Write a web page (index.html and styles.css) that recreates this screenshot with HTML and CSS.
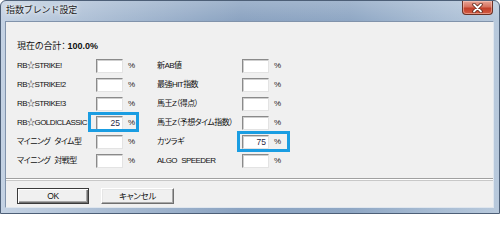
FILE: index.html
```html
<!DOCTYPE html>
<html lang="ja">
<head>
<meta charset="utf-8">
<title>指数ブレンド設定</title>
<link rel="stylesheet" href="styles.css">
</head>
<body>
<div class="window">
  <div class="titlebar">
    <span class="title">指数ブレンド設定</span>
    <button class="close" aria-label="閉じる">
      <svg width="13" height="10" viewBox="0 0 13 10">
        <path d="M3 1.5 L10 8.5 M10 1.5 L3 8.5" stroke="#5a2418" stroke-width="3.4" stroke-linecap="round"/>
        <path d="M3 1.5 L10 8.5 M10 1.5 L3 8.5" stroke="#ffffff" stroke-width="1.8" stroke-linecap="round"/>
      </svg>
    </button>
  </div>
  <div class="client">
    <div class="top">
      <div class="summary">現在の合計： <b>100.0%</b></div>
      <div class="grid">
        <span class="label">RB☆STRIKE!</span><span class="cell"><input class="field" type="text" value=""></span><span class="pct">%</span>
        <span class="label">新AB値</span><span class="cell"><input class="field" type="text" value=""></span><span class="pct">%</span>

        <span class="label">RB☆STRIKE!2</span><span class="cell"><input class="field" type="text" value=""></span><span class="pct">%</span>
        <span class="label">最強HIT指数</span><span class="cell"><input class="field" type="text" value=""></span><span class="pct">%</span>

        <span class="label">RB☆STRIKE!3</span><span class="cell"><input class="field" type="text" value=""></span><span class="pct">%</span>
        <span class="label">馬王Z（得点）</span><span class="cell"><input class="field" type="text" value=""></span><span class="pct">%</span>

        <span class="label">RB☆GOLD!CLASSIC</span><span class="cell"><input class="field" type="text" value="25"><span class="mark mark-a"></span></span><span class="pct">%</span>
        <span class="label">馬王Z（予想タイム指数）</span><span class="cell"><input class="field" type="text" value=""></span><span class="pct">%</span>

        <span class="label">マイニング タイム型</span><span class="cell"><input class="field" type="text" value=""></span><span class="pct">%</span>
        <span class="label">カツラギ</span><span class="cell"><input class="field" type="text" value="75"><span class="mark mark-b"></span></span><span class="pct">%</span>

        <span class="label">マイニング 対戦型</span><span class="cell"><input class="field" type="text" value=""></span><span class="pct">%</span>
        <span class="label">ALGO SPEEDER</span><span class="cell"><input class="field" type="text" value=""></span><span class="pct">%</span>
      </div>
    </div>
    <div class="bottom">
      <button class="btn btn-default">OK</button>
      <button class="btn btn-cancel">キャンセル</button>
    </div>
  </div>
</div>
</body>
</html>
```

FILE: styles.css
```css
html, body {
  margin: 0;
  padding: 0;
  width: 500px;
  height: 214px;
  overflow: hidden;
  background: #ffffff;
}

.window {
  width: 500px;
  height: 214px;
  box-sizing: border-box;
  border: 1px solid #4d5f77;
  border-radius: 6px 6px 0 0;
  background:
    linear-gradient(180deg, rgba(255,255,255,0.18) 0px, rgba(255,255,255,0) 20px),
    linear-gradient(90deg, #c4d2e3 0%, #a9bcd3 22%, #8ba3c1 48%, #8fa7c4 70%, #a9bdd4 88%, #b8c9dc 100%);
  display: flex;
  flex-direction: column;
  font-family: "Liberation Sans", "Noto Sans CJK JP", sans-serif;
  color: #111;
}

.titlebar {
  height: 19px;
  flex: none;
  display: flex;
  align-items: flex-start;
  padding-left: 5px;
  padding-right: 6px;
}

.title {
  font-family: "Noto Sans CJK JP", sans-serif;
  font-size: 9px;
  line-height: 18px;
  color: #1b1b1b;
  letter-spacing: -0.1px;
  text-shadow: 0 0 6px rgba(255,255,255,0.95), 0 0 3px rgba(255,255,255,0.9);
}

.close {
  margin-left: auto;
  width: 31px;
  height: 14px;
  padding: 0;
  border: 1px solid #6b3226;
  border-top: none;
  border-radius: 0 0 4px 4px;
  background: linear-gradient(180deg, #e8a496 0%, #d7725f 45%, #c2402a 55%, #d35b43 100%);
  box-shadow: inset 0 0 0 1px rgba(255,220,210,0.45);
  display: flex;
  align-items: center;
  justify-content: center;
}

.client {
  flex: none;
  margin: 1px 5px 0 4px;
  height: 187px;
  box-sizing: border-box;
  border: 1px solid #8193ab;
  border-right-color: #dfe6ee;
  border-bottom-color: #dfe6ee;
  background: #f0f0f0;
  display: flex;
  flex-direction: column;
}

.top {
  flex: none;
  box-sizing: border-box;
  height: 157px;
  padding: 18px 0 0 11px;
  border-bottom: 1px solid #a0a0a0;
  font-size: 8px;
  letter-spacing: -0.55px;
  word-spacing: 2.5px;
  font-feature-settings: "palt";
}

.summary {
  height: 12px;
  line-height: 12px;
  margin-bottom: 7px;
  font-family: "Noto Sans CJK JP", sans-serif;
  font-size: 9px;
  letter-spacing: -0.1px;
  word-spacing: 0;
  white-space: pre;
}

.summary b {
  font-family: "Liberation Sans", sans-serif;
  font-weight: bold;
  font-size: 9px;
  letter-spacing: 0;
}

.grid {
  display: grid;
  grid-template-columns: 79px 27px 34px 85px 27px 20px;
  grid-auto-rows: 14px;
  row-gap: 5px;
  align-items: center;
}

.label {
  line-height: 14px;
  white-space: nowrap;
}

.cell {
  position: relative;
  height: 14px;
}

.field {
  appearance: none;
  display: block;
  box-sizing: border-box;
  width: 27px;
  height: 14px;
  margin: 0;
  padding: 0 2px 0 0;
  border: 1px solid;
  border-color: #8a8a8a #e3e3e3 #e3e3e3 #8a8a8a;
  box-shadow: inset 1px 1px 0 #cfcfcf;
  background: #ffffff;
  font-family: "Liberation Sans", sans-serif;
  font-size: 8.5px;
  letter-spacing: 0;
  color: #2c2a48;
  text-align: right;
  outline: none;
}

.pct {
  padding-left: 5px;
  font-size: 8px;
  letter-spacing: -0.2px;
  line-height: 14px;
  color: #222;
}

.mark {
  position: absolute;
  box-sizing: border-box;
  border: 3px solid #1a9de2;
  pointer-events: none;
}

.mark-a {
  left: -8px;
  top: -4px;
  width: 51px;
  height: 20px;
}

.mark-b {
  left: -5px;
  top: -4px;
  width: 53px;
  height: 21px;
}

.bottom {
  flex: 1;
  display: flex;
  align-items: flex-start;
  gap: 12px;
  padding: 8px 0 0 11px;
  border-top: 1px solid #ffffff;
  box-shadow: inset 0 1px 0 #c8c8c8;
}

.btn {
  box-sizing: border-box;
  height: 16px;
  padding: 0;
  background: #f0f0f0;
  font-family: "Liberation Sans", "Noto Sans CJK JP", sans-serif;
  font-size: 8.5px;
  letter-spacing: -0.3px;
  font-feature-settings: "palt";
  color: #111;
  line-height: 12px;
}

.btn-default {
  width: 72px;
  border: 1px solid #3a3a3a;
  box-shadow: inset 1px 1px 0 #ffffff, inset -1px -1px 0 #6f6f6f, inset -2px -2px 0 #a8a8a8;
}

.btn-cancel {
  width: 73px;
  border: 1px solid;
  border-color: #ffffff #6f6f6f #6f6f6f #ffffff;
  box-shadow: inset -1px -1px 0 #a8a8a8, inset 1px 1px 0 #e6e6e6;
}
```
